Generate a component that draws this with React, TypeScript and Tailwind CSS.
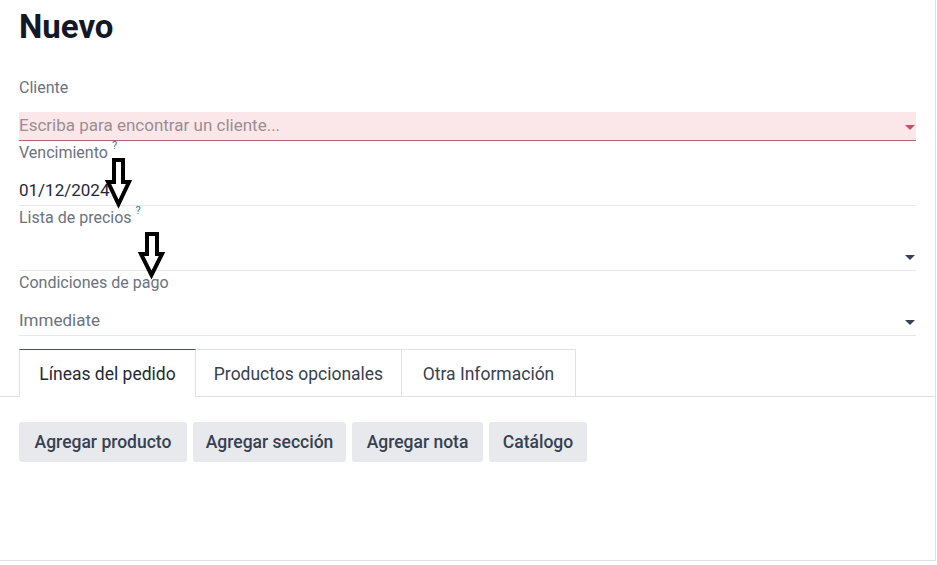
import React from 'react';

const font = { fontFamily: 'Roboto, "Liberation Sans", sans-serif' };

function Caret({ className }: { className: string }) {
  return (
    <svg width="10" height="6" viewBox="0 0 10 6" className={className}>
      <path d="M0 0 L10 0 L5 5 Z" fill="currentColor" />
    </svg>
  );
}

function Label({ text, help }: { text: string; help?: boolean }) {
  return (
    <div className="h-[24px] leading-[24px] text-[16px] text-[#6b7280] flex items-center">
      <span>{text}</span>
      {help && <sup className="ml-[4px] text-[11px] text-[#1f7a99] -translate-y-[2px]">?</sup>}
    </div>
  );
}

function Field({
  label,
  help,
  value,
  valueClass = 'text-[#1f2937]',
  caret,
}: {
  label: string;
  help?: boolean;
  value?: string;
  valueClass?: string;
  caret?: boolean;
}) {
  return (
    <div>
      <Label text={label} help={help} />
      <div className="mt-[12px] h-[29px] border-b border-[#e5e7eb] flex items-center justify-between">
        <span className={`text-[17px] ${valueClass}`}>{value}</span>
        {caret && <Caret className="text-[#374151] mr-[1px] mt-[4px]" />}
      </div>
    </div>
  );
}

const buttons = [
  { label: 'Agregar producto', w: 'w-[168px]' },
  { label: 'Agregar sección', w: 'w-[153px]' },
  { label: 'Agregar nota', w: 'w-[131px]' },
  { label: 'Catálogo', w: 'w-[98px]' },
];

export default function App() {
  return (
    <div className="relative w-[936px] h-[561px] bg-white border-r border-b border-[#dee2e6]" style={font}>
      <div className="pl-[19px] pr-[19px] pt-[8px]">
        <h1 className="text-[33px] leading-[38px] font-bold text-[#111827]">Nuevo</h1>

        <div className="mt-[30px]">
          <Label text="Cliente" />
          <div className="mt-[12px] h-[29px] bg-[#fbe7e9] border-b border-[#b9616d] flex items-center justify-between">
            <span className="text-[17px] text-[#9b8d92]">Escriba para encontrar un cliente...</span>
            <Caret className="text-[#c0566a] mr-[1px] mt-[4px]" />
          </div>
        </div>

        <Field label="Vencimiento" help value="01/12/2024" />
        <Field label="Lista de precios" help caret />
        <Field label="Condiciones de pago" value="Immediate" valueClass="text-[#6b7280]" caret />
      </div>

      {/* tabs */}
      <div className="mt-[13px] border-b border-[#dee2e6] pl-[19px] flex h-[48px]">
        <div className="w-[177px] pt-[2px] flex items-center justify-center border border-b-0 border-[#dee2e6] border-t-[#495057] bg-white -mb-px text-[17.5px] text-[#1f2937]">
          Líneas del pedido
        </div>
        <div className="w-[206px] pt-[2px] flex items-center justify-center border-t border-r border-[#dee2e6] text-[17.5px] text-[#374151]">
          Productos opcionales
        </div>
        <div className="w-[174px] pt-[2px] flex items-center justify-center border-t border-r border-[#dee2e6] text-[17.5px] text-[#374151]">
          Otra Información
        </div>
      </div>

      {/* actions */}
      <div className="pl-[19px] mt-[25px] flex gap-[6px]">
        {buttons.map((b) => (
          <button
            key={b.label}
            className={`${b.w} h-[40px] rounded-[3px] bg-[#e7e9ed] text-[17.5px] font-medium text-[#374151] whitespace-nowrap`}
          >
            {b.label}
          </button>
        ))}
      </div>

      {/* annotation arrows */}
      <svg className="absolute left-0 top-0 pointer-events-none" width="937" height="565">
        <polygon
          points="114,160 123,160 123,182 129,182 118.5,204 108,182 114,182"
          fill="white"
          stroke="black"
          strokeWidth="4"
          strokeLinejoin="miter"
        />
        <polygon
          points="147,234 157,234 157,254 162,254 151.5,275 141,254 147,254"
          fill="white"
          stroke="black"
          strokeWidth="4"
          strokeLinejoin="miter"
        />
      </svg>
    </div>
  );
}
